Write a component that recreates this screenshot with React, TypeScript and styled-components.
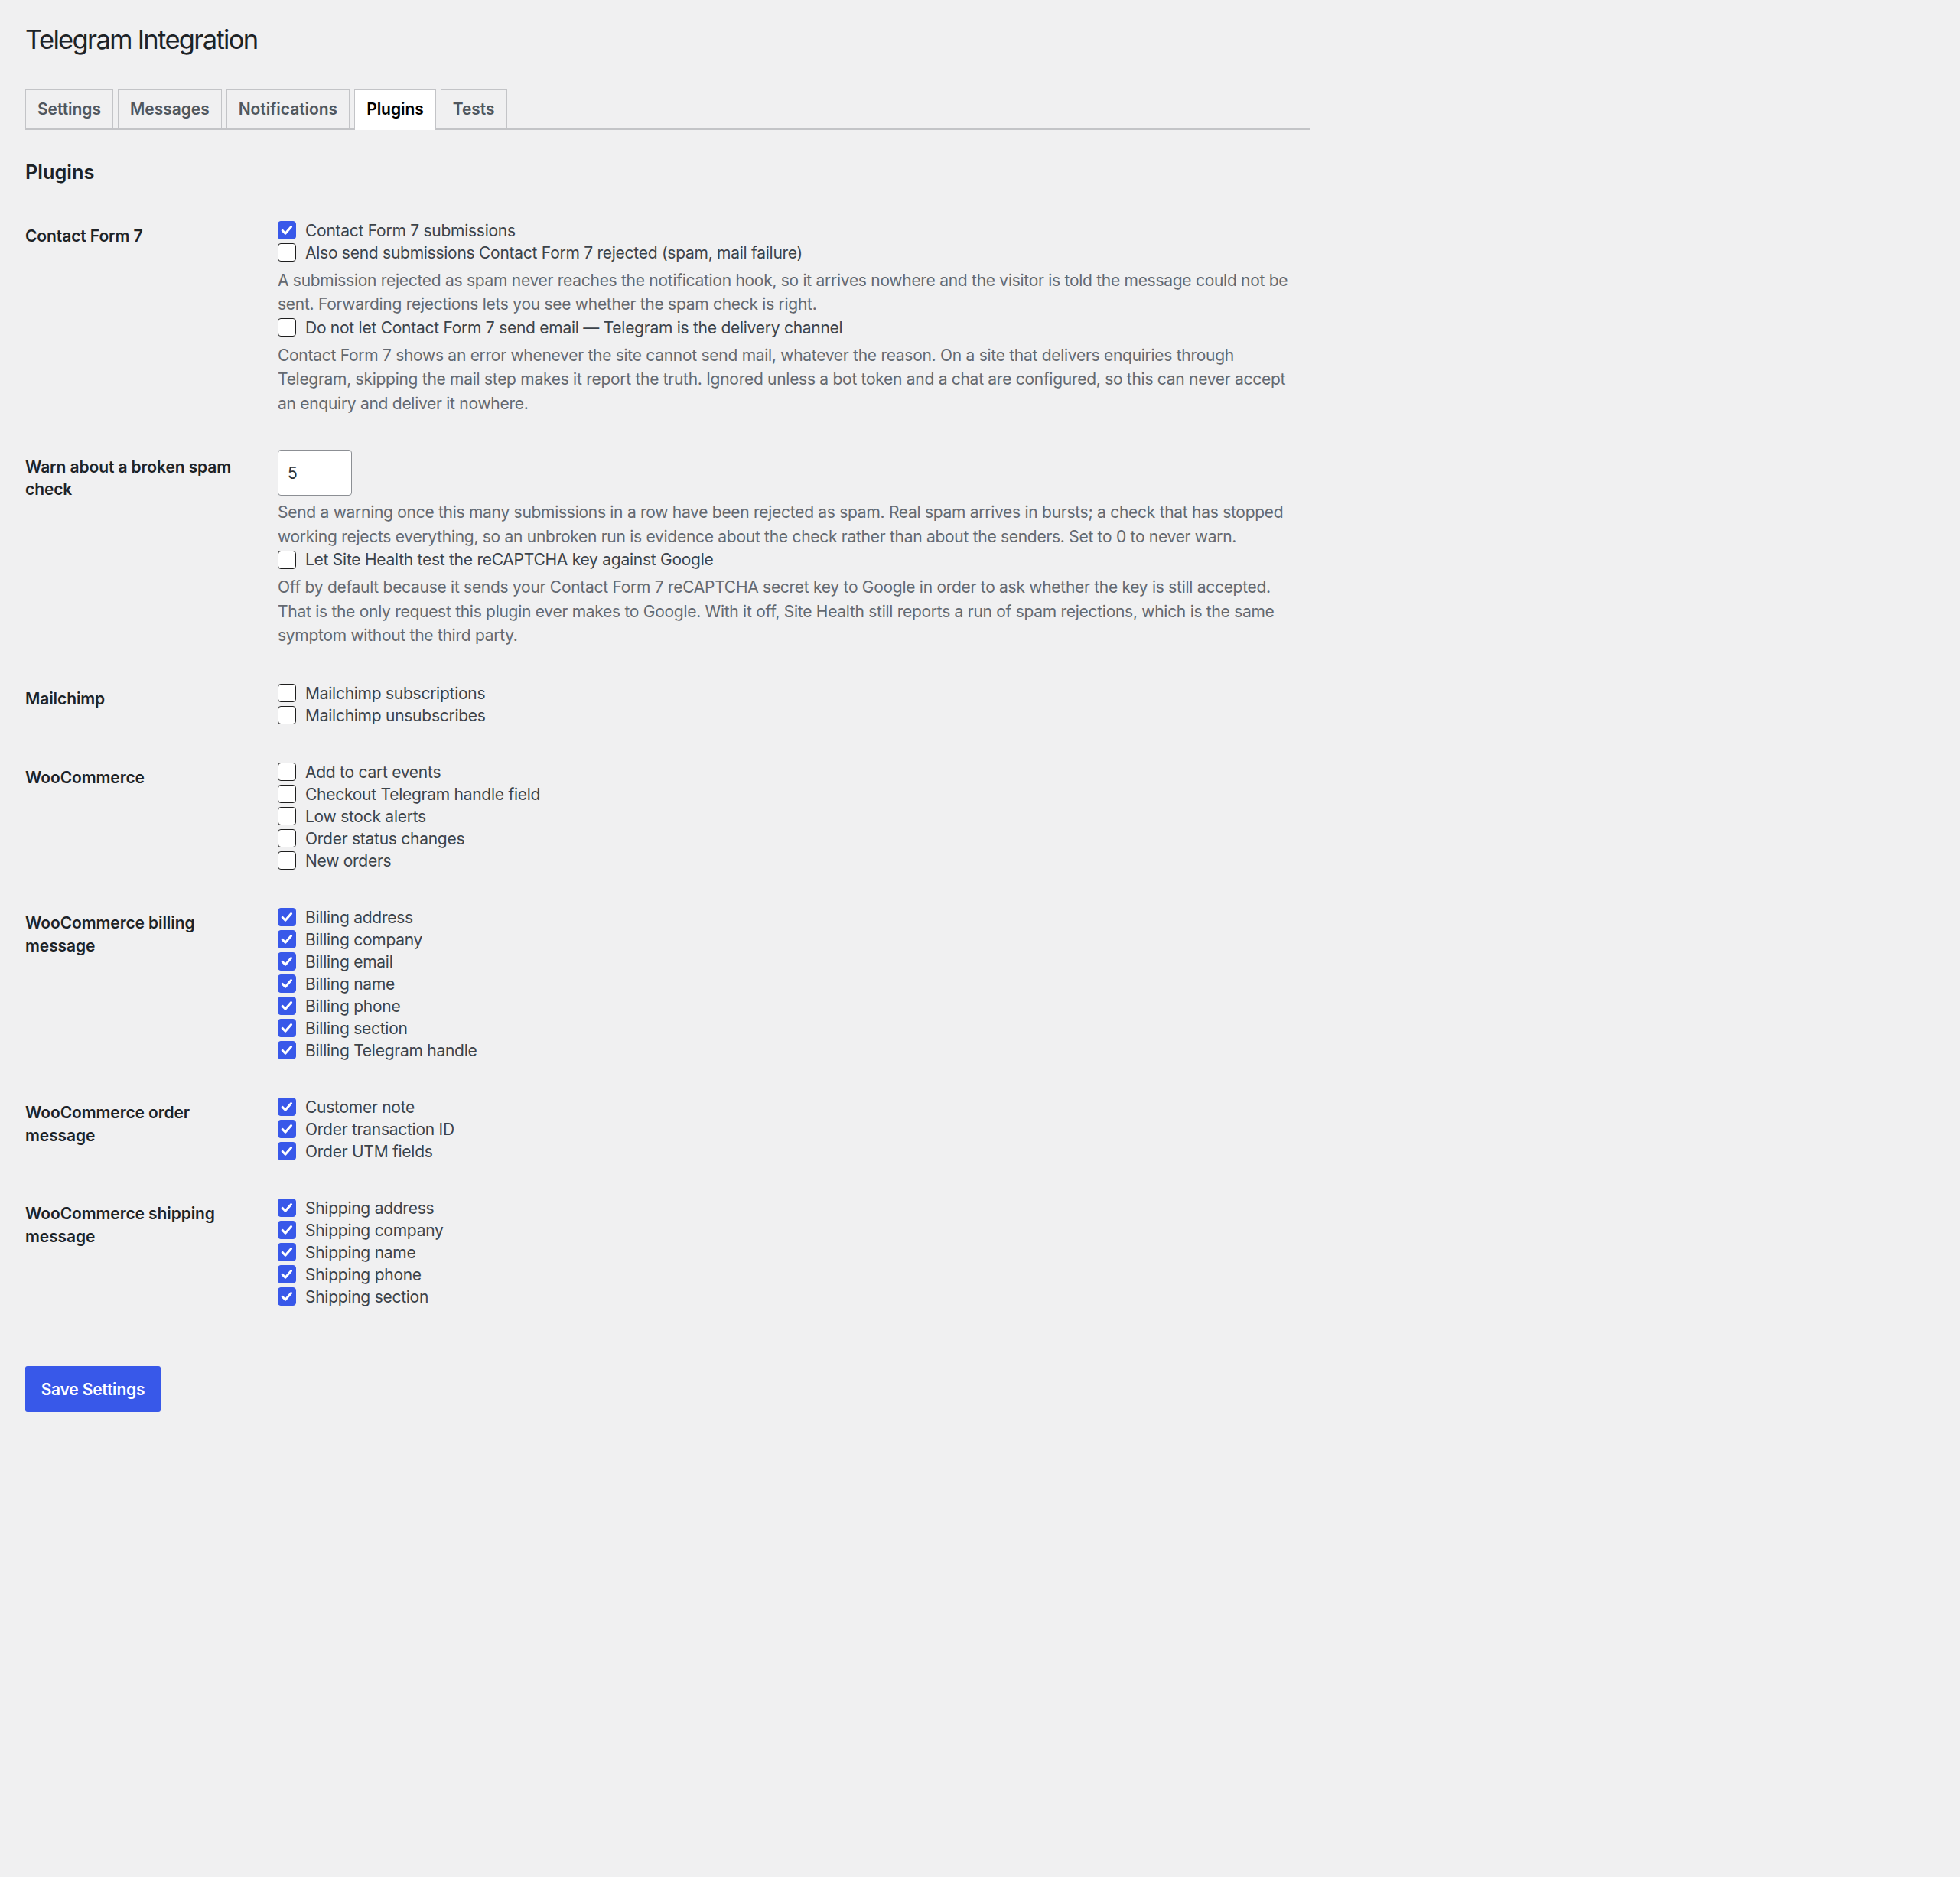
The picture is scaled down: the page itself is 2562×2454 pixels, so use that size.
import React from "react";
import styled, { createGlobalStyle } from "styled-components";

const GlobalStyle = createGlobalStyle`
  html, body { margin: 0; padding: 0; background: #f0f0f1; }
  body {
    font-family: Inter, "Noto Sans", "Liberation Sans", sans-serif;
    color: #3c434a;
    -webkit-font-smoothing: antialiased;
  }
  * { box-sizing: border-box; }
`;

const Wrap = styled.div`
  width: 1713px;
  padding: 29.6px 0 200px 33px;
  min-height: 2454px;
`;

const Title = styled.h1`
  margin: 0;
  font-size: 34.5px;
  font-weight: 400;
  line-height: 44.9px;
  letter-spacing: -1.65px;
  color: #1d2327;
`;

const NavWrapper = styled.nav`
  display: flex;
  align-items: flex-end;
  gap: 6px;
  margin-top: 42.8px;
  border-bottom: 2px solid #c3c4c7;
`;

const Tab = styled.a<{ $active?: boolean }>`
  display: flex;
  align-items: center;
  height: ${(p) => (p.$active ? "53px" : "51px")};
  margin-bottom: ${(p) => (p.$active ? "-2px" : "0")};
  padding: 0 15px ${(p) => (p.$active ? "2px" : "0")};
  border: 1.5px solid #c3c4c7;
  border-bottom: none;
  background: ${(p) => (p.$active ? "#ffffff" : "#f0f0f1")};
  color: ${(p) => (p.$active ? "#000000" : "#50575e")};
  font-size: 21px;
  font-weight: 600;
  line-height: 36px;
  letter-spacing: -0.04px;
  text-decoration: none;
  white-space: nowrap;
`;

const SectionTitle = styled.h2`
  margin: 37.5px 0 0;
  font-size: 25.35px;
  font-weight: 600;
  line-height: 33px;
  color: #1d2327;
`;

const Table = styled.div`
  margin-top: 23.5px;
  display: flex;
  flex-direction: column;
`;

const Row = styled.div`
  display: grid;
  grid-template-columns: 330px 1fr;
`;

const Th = styled.div`
  padding-top: 30px;
  font-size: 21px;
  font-weight: 600;
  line-height: 29.4px;
  letter-spacing: -0.1px;
  color: #1d2327;
  white-space: nowrap;
`;

const Td = styled.div`
  padding: 22.5px 0;
  display: flex;
  flex-direction: column;
  align-items: flex-start;
`;

const CheckRow = styled.label`
  display: flex;
  align-items: center;
  gap: 12px;
  height: 29px;
  font-size: 21px;
  line-height: 29px;
  letter-spacing: -0.26px;
  color: #3c434a;
  white-space: nowrap;
`;

const Box = styled.span<{ $checked?: boolean }>`
  flex: none;
  width: 24px;
  height: 24px;
  border-radius: 4px;
  border: 1.5px solid ${(p) => (p.$checked ? "#3858e9" : "#1e1e1e")};
  background: ${(p) => (p.$checked ? "#3858e9" : "#ffffff")};
  display: flex;
  align-items: center;
  justify-content: center;
`;

const Desc = styled.p`
  margin: 6px 0 0;
  font-size: 21px;
  line-height: 31.5px;
  letter-spacing: -0.28px;
  color: #646970;
  white-space: nowrap;
`;

const Line = styled.span`
  display: block;
`;

const NumberInput = styled.div`
  width: 97px;
  height: 60px;
  border: 1.5px solid #8c8f94;
  border-radius: 4px;
  background: #ffffff;
  padding-left: 12px;
  display: flex;
  align-items: center;
  font-size: 21px;
  color: #2c3338;
`;

const SaveButton = styled.button`
  margin-top: 54px;
  width: 177px;
  height: 60px;
  border: none;
  border-radius: 3px;
  background: #3858e9;
  color: #ffffff;
  font-family: inherit;
  font-size: 21px;
  font-weight: 600;
  letter-spacing: -0.2px;
  padding: 0;
  cursor: pointer;
`;

const Check = () => (
  <svg width="20" height="20" viewBox="0 0 20 20">
    <polyline
      points="4.2,10.4 8,14.2 15.6,5.6"
      fill="none"
      stroke="#ffffff"
      strokeWidth="3"
      strokeLinecap="round"
      strokeLinejoin="round"
    />
  </svg>
);

const Checkbox = ({ checked, label }: { checked?: boolean; label: string }) => (
  <CheckRow>
    <Box $checked={checked}>{checked ? <Check /> : null}</Box>
    {label}
  </CheckRow>
);

const Description = ({ lines }: { lines: string[] }) => (
  <Desc>
    {lines.map((l, i) => (
      <Line key={i}>{l}</Line>
    ))}
  </Desc>
);

const Heading = ({ lines }: { lines: string[] }) => (
  <Th>
    {lines.map((l, i) => (
      <Line key={i}>{l}</Line>
    ))}
  </Th>
);

type Item = { label: string; checked?: boolean };

const lists: { heading: string[]; items: Item[] }[] = [
  {
    heading: ["Mailchimp"],
    items: [{ label: "Mailchimp subscriptions" }, { label: "Mailchimp unsubscribes" }],
  },
  {
    heading: ["WooCommerce"],
    items: [
      { label: "Add to cart events" },
      { label: "Checkout Telegram handle field" },
      { label: "Low stock alerts" },
      { label: "Order status changes" },
      { label: "New orders" },
    ],
  },
  {
    heading: ["WooCommerce billing", "message"],
    items: [
      "Billing address",
      "Billing company",
      "Billing email",
      "Billing name",
      "Billing phone",
      "Billing section",
      "Billing Telegram handle",
    ].map((label) => ({ label, checked: true })),
  },
  {
    heading: ["WooCommerce order", "message"],
    items: ["Customer note", "Order transaction ID", "Order UTM fields"].map((label) => ({
      label,
      checked: true,
    })),
  },
  {
    heading: ["WooCommerce shipping", "message"],
    items: [
      "Shipping address",
      "Shipping company",
      "Shipping name",
      "Shipping phone",
      "Shipping section",
    ].map((label) => ({ label, checked: true })),
  },
];

const tabs = ["Settings", "Messages", "Notifications", "Plugins", "Tests"];

export default function App() {
  return (
    <>
      <GlobalStyle />
      <Wrap>
        <Title>Telegram Integration</Title>
        <NavWrapper>
          {tabs.map((t) => (
            <Tab key={t} $active={t === "Plugins"} href="#">
              {t}
            </Tab>
          ))}
        </NavWrapper>
        <SectionTitle>Plugins</SectionTitle>
        <Table>
          <Row>
            <Heading lines={["Contact Form 7"]} />
            <Td>
              <Checkbox checked label="Contact Form 7 submissions" />
              <Checkbox label="Also send submissions Contact Form 7 rejected (spam, mail failure)" />
              <Description
                lines={[
                  "A submission rejected as spam never reaches the notification hook, so it arrives nowhere and the visitor is told the message could not be",
                  "sent. Forwarding rejections lets you see whether the spam check is right.",
                ]}
              />
              <Checkbox label="Do not let Contact Form 7 send email — Telegram is the delivery channel" />
              <Description
                lines={[
                  "Contact Form 7 shows an error whenever the site cannot send mail, whatever the reason. On a site that delivers enquiries through",
                  "Telegram, skipping the mail step makes it report the truth. Ignored unless a bot token and a chat are configured, so this can never accept",
                  "an enquiry and deliver it nowhere.",
                ]}
              />
            </Td>
          </Row>
          <Row>
            <Heading lines={["Warn about a broken spam", "check"]} />
            <Td>
              <NumberInput>5</NumberInput>
              <Description
                lines={[
                  "Send a warning once this many submissions in a row have been rejected as spam. Real spam arrives in bursts; a check that has stopped",
                  "working rejects everything, so an unbroken run is evidence about the check rather than about the senders. Set to 0 to never warn.",
                ]}
              />
              <Checkbox label="Let Site Health test the reCAPTCHA key against Google" />
              <Description
                lines={[
                  "Off by default because it sends your Contact Form 7 reCAPTCHA secret key to Google in order to ask whether the key is still accepted.",
                  "That is the only request this plugin ever makes to Google. With it off, Site Health still reports a run of spam rejections, which is the same",
                  "symptom without the third party.",
                ]}
              />
            </Td>
          </Row>
          {lists.map((s) => (
            <Row key={s.heading.join(" ")}>
              <Heading lines={s.heading} />
              <Td>
                {s.items.map((it) => (
                  <Checkbox key={it.label} checked={it.checked} label={it.label} />
                ))}
              </Td>
            </Row>
          ))}
        </Table>
        <SaveButton type="button">Save Settings</SaveButton>
      </Wrap>
    </>
  );
}
